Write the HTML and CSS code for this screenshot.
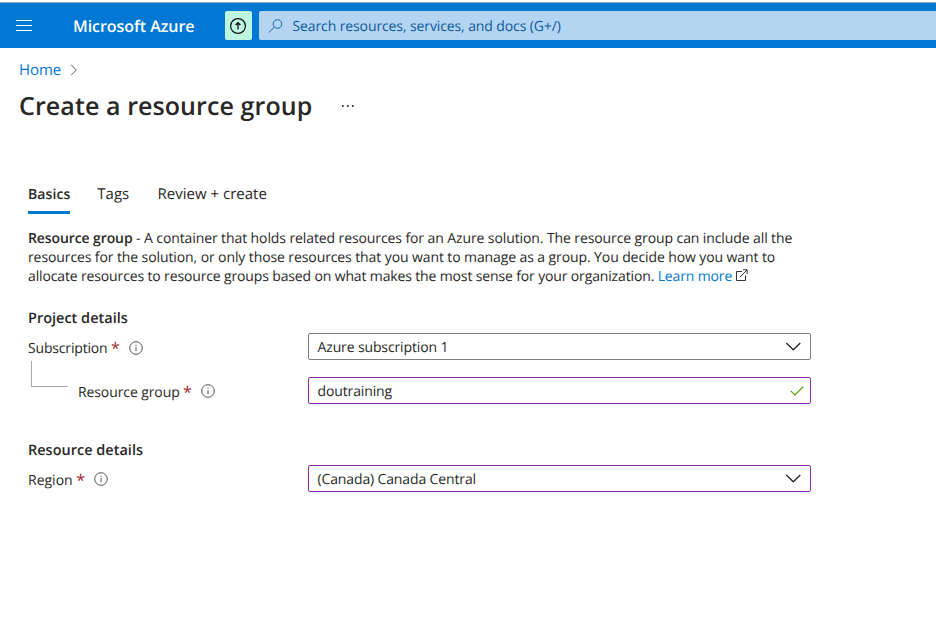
FILE: index.html
```html
<!DOCTYPE html>
<html lang="en">
<head>
<meta charset="utf-8">
<title>Create a resource group - Microsoft Azure</title>
<link rel="stylesheet" href="styles.css">
</head>
<body>
<header class="topbar">
  <svg class="menu" width="16" height="12" viewBox="0 0 16 12" stroke="#fff" stroke-width="1"><path d="M0 .5H16M0 5.5H16M0 10.5H16"/></svg>
  <span class="brand">Microsoft Azure</span>
  <span class="upgrade"><svg width="18" height="18" viewBox="0 0 18 18" fill="none" stroke="#111"><circle cx="9" cy="9" r="7.4" stroke-width="1.2"/><path d="M9 12.5V6M6.6 8L9 5.7L11.4 8" stroke-width="1.3"/></svg></span>
  <div class="search">
    <svg width="15" height="14" viewBox="0 0 15 14" fill="none" stroke="#1f5f9f" stroke-width="1"><circle cx="9.5" cy="5" r="4.3"/><path d="M6.4 8.1L.7 13.5"/></svg>
    <span class="search-text">Search resources, services, and docs (G+/)</span>
  </div>
</header>
<nav class="crumbs"><a class="home">Home</a><svg width="8" height="12" viewBox="0 0 8 12" fill="none" stroke="#605e5c"><path d="M1 .7L6.3 6L1 11.3"/></svg></nav>
<div class="title-row"><h1>Create a resource group</h1><svg width="14" height="4" viewBox="0 0 14 4" fill="#222"><circle cx="1.8" cy="2" r="1"/><circle cx="6.8" cy="2" r="1"/><circle cx="11.8" cy="2" r="1"/></svg></div>
<main>
  <div class="tabs"><span class="tab active">Basics</span><span class="tab tags">Tags</span><span class="tab review">Review + create</span></div>
  <p class="intro"><span class="l1"><b>Resource group</b> - A container that holds related resources for an Azure solution. The resource group can include all the</span><span class="l2">resources for the solution, or only those resources that you want to manage as a group. You decide how you want to</span><span class="l3">allocate resources to resource groups based on what makes the most sense for your organization. <a>Learn more</a><svg width="13" height="13" viewBox="0 0 13 13" fill="none" stroke="#333"><path d="M7 2.5H1.5V11.5H10.5V6.5M5 8L12 1M8 .8H12.2V5"/></svg></span></p>
  <h2>Project details</h2>
  <div class="row sub">
    <div class="label low"><span class="t-sub">Subscription</span><i class="star">*</i><svg class="info" width="14" height="14" viewBox="0 0 14 14" fill="none" stroke="#555"><circle cx="7" cy="7" r="6.3"/><path d="M7 6V10.2M7 3.7V4.9"/></svg></div>
    <div class="field gray"><span class="value">Azure subscription 1</span><svg class="chev" width="16" height="9" viewBox="0 0 16 9" fill="none" stroke="#222" stroke-width="1.2"><path d="M1.3 1L8.3 7.8L15.3 1"/></svg></div>
  </div>
  <div class="row group">
    <div class="label"><span class="elbow"></span><span class="t-group">Resource group</span><i class="star">*</i><svg class="info" width="14" height="14" viewBox="0 0 14 14" fill="none" stroke="#555"><circle cx="7" cy="7" r="6.3"/><path d="M7 6V10.2M7 3.7V4.9"/></svg></div>
    <div class="field"><span class="value">doutraining</span><svg class="check" width="14" height="10" viewBox="0 0 14 10" fill="none" stroke="#57a300" stroke-width="1.2"><path d="M.7 4.8L4.9 9L13.3 .7"/></svg></div>
  </div>
  <h2 class="second">Resource details</h2>
  <div class="row region">
    <div class="label"><span class="t-region">Region</span><i class="star">*</i><svg class="info" width="14" height="14" viewBox="0 0 14 14" fill="none" stroke="#555"><circle cx="7" cy="7" r="6.3"/><path d="M7 6V10.2M7 3.7V4.9"/></svg></div>
    <div class="field"><span class="value">(Canada) Canada Central</span><svg class="chev" width="16" height="9" viewBox="0 0 16 9" fill="none" stroke="#222" stroke-width="1.2"><path d="M1.3 1L8.3 7.8L15.3 1"/></svg></div>
  </div>
</main>
</body>
</html>
```
FILE: styles.css
```css
* { box-sizing: border-box; }
body { margin: 0; background: #fff; color: #292827; font: 14px/19px "Open Sans", "Noto Sans", sans-serif; white-space: nowrap; overflow: hidden; text-rendering: geometricPrecision; }
svg { display: block; flex: none; }
a { color: #0078d4; }
.topbar { height: 46px; border-top: 1px solid #9ab; margin-top: 2px; background: #0078d4; display: flex; align-items: center; padding-left: 16px; }
.menu { margin-top: 1px; }
.brand { width: 193px; padding: 2px 0 0 41px; color: #fff; font-size: 16px; font-weight: 600; letter-spacing: -.05px; }
.upgrade { width: 27px; height: 29px; border-radius: 2px; background: #bdf5e0; display: flex; align-items: center; justify-content: center; padding-right: 1px; }
.search { flex: 1; height: 29px; margin-left: 7px; border-radius: 2px 0 0 2px; background: #b3d5f2; display: flex; align-items: center; padding-left: 9px; gap: 9.5px; color: #10589c; letter-spacing: -.11px; }
.search-text { padding-top: 1px; }
.crumbs { display: flex; align-items: center; height: 20px; margin: 12px 0 0 19px; font-size: 15px; }
.home { width: 51px; letter-spacing: -.1px; }
.title-row { display: flex; align-items: center; height: 34px; margin: 9px 0 0 19px; }
h1 { margin: 0; width: 322px; font-size: 25px; line-height: 34px; font-weight: 600; letter-spacing: .09px; }
main { padding: 61px 0 0 28px; }
.tabs { display: flex; height: 30px; gap: 27.3px; }
.tab { height: 30px; font-size: 15px; padding-top: 1px; }
.active { width: 42px; font-size: 14px; letter-spacing: .08px; font-weight: 600; border-bottom: 3px solid #0078d4; }
.tags { width: 33px; }
.intro { margin: 15px 0 0; }
.intro span { display: flex; white-space: pre; }
.l1, .l2 { letter-spacing: -.1px; }
.l3 { letter-spacing: -.14px; }
.intro b { font-weight: 600; }
.intro svg { margin: 2px 0 0 3px; }
h2 { margin: 23px 0 0; font-size: 14.5px; line-height: 19px; font-weight: 600; }
.row { display: flex; align-items: center; height: 27px; }
.label { width: 279.5px; display: flex; align-items: center; padding-top: 3px; }
.low { padding-top: 4px; }
.t-sub { letter-spacing: -.17px; }
.t-group { letter-spacing: -.1px; }
.star { font-style: normal; color: #a4262c; font-size: 16px; margin-left: 3.5px; width: 7px; }
.info { margin-left: 11px; margin-top: -2px; }
.sub { margin-top: 5px; }
.group { margin-top: 17px; }
.elbow { width: 37px; height: 26px; border: solid #aaa; border-width: 0 0 1px 1px; margin: -36px 10px 0 3px; }
.field { width: 503px; height: 27px; border: 1px solid #8a2da5; border-radius: 2px; display: flex; align-items: center; justify-content: space-between; padding: 0 9px; }
.gray { border-color: #807e7c; }
.value { letter-spacing: -.13px; padding-top: 2px; }
.check { margin-right: -3px; }
.second { margin-top: 37px; }
.region { margin-top: 5px; }
```
